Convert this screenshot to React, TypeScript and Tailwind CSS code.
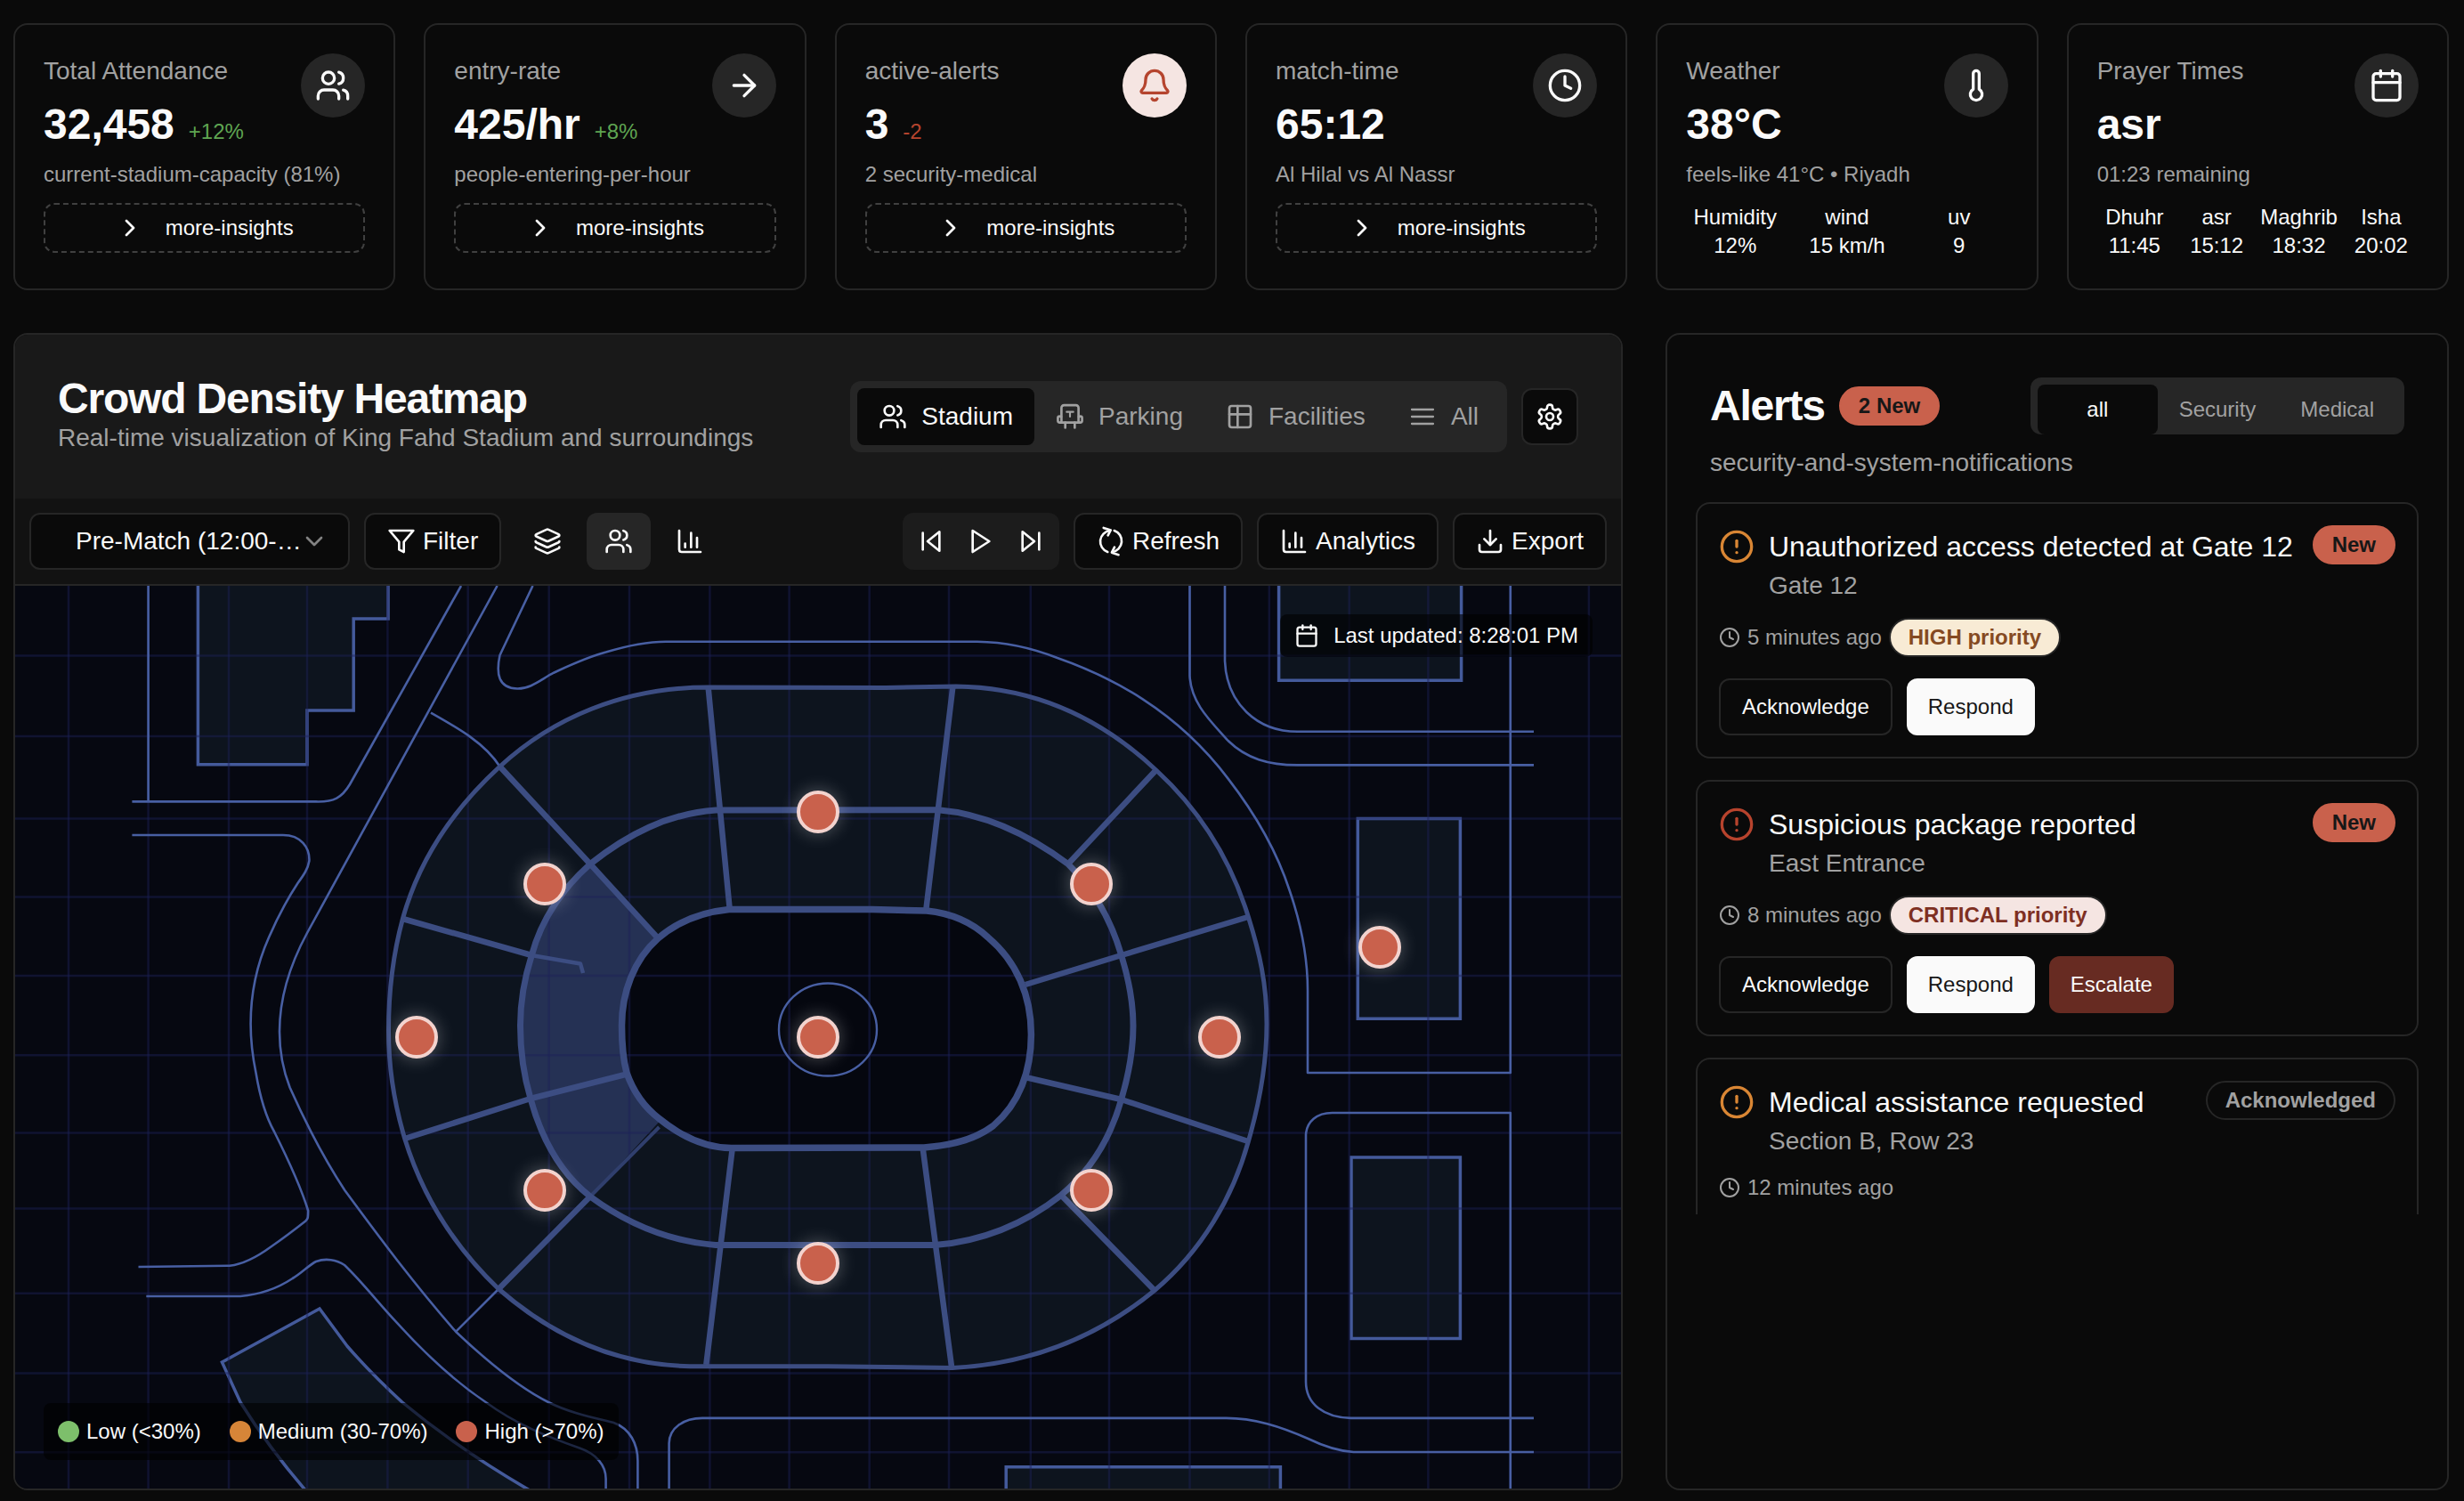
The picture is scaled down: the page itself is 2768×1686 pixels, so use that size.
import type { ReactNode } from "react";
import {
  ArrowRight,
  Bell,
  Calendar,
  ChartColumn,
  ChevronDown,
  ChevronRight,
  CircleAlert,
  Clock,
  Download,
  Layers,
  Thermometer,
  Users,
} from "lucide-react";

/* ---------- custom line icons ---------- */

function Icon({ className, children }: { className?: string; children: ReactNode }) {
  return (
    <svg
      viewBox="0 0 24 24"
      fill="none"
      stroke="currentColor"
      strokeWidth={2}
      strokeLinecap="round"
      strokeLinejoin="round"
      className={className}
    >
      {children}
    </svg>
  );
}

const FunnelIcon = () => (
  <Icon className="size-8">
    <polygon points="22 3 2 3 10 12.46 10 19 14 21 14 12.46 22 3" />
  </Icon>
);

const SkipBackIcon = () => (
  <Icon className="size-8">
    <polygon points="19 20 9 12 19 4 19 20" />
    <line x1="5" x2="5" y1="19" y2="5" />
  </Icon>
);

const PlayIcon = () => (
  <Icon className="size-8">
    <polygon points="5 3 19 12 5 21 5 3" />
  </Icon>
);

const SkipForwardIcon = () => (
  <Icon className="size-8">
    <polygon points="5 4 15 12 5 20 5 4" />
    <line x1="19" x2="19" y1="5" y2="19" />
  </Icon>
);

const RefreshIcon = () => (
  <Icon className="size-8 overflow-visible">
    <path d="M9.200 21A9.300 9.300 0 0 1 11.200 3" />
    <path d="M5.800 .7 11.800 2.600 9.500 7" />
    <path d="M14.800 3A9.300 9.300 0 0 1 13 21" />
    <path d="M15 17 12.700 21.500 18.400 23.400" />
  </Icon>
);

const ParkingIcon = () => (
  <Icon className="size-8">
    <path d="M4.8 12V4.6A2.2 2.2 0 0 1 7 2.4h10a2.2 2.2 0 0 1 2.2 2.2V12" />
    <path d="M4.8 17H3.4a1.6 1.6 0 0 1-1.6-1.6v-2.2a1.5 1.5 0 0 1 3 0V17h14.4v-3.8a1.5 1.5 0 0 1 3 0v2.2a1.6 1.6 0 0 1-1.6 1.6h-1.4" />
    <path d="M8 17v4.4M16 17v4.4" />
    <path d="M9.2 8h5.6M12 8v4" strokeWidth={1.6} />
  </Icon>
);

const FacilitiesIcon = () => (
  <Icon className="size-8">
    <rect x="3" y="3" width="18" height="18" rx="2" />
    <path d="M10 3v18M3 10h18" />
  </Icon>
);

const ListIcon = () => (
  <Icon className="size-8">
    <path d="M3 6h18M3 12h18M3 18h18" strokeWidth={1.7} />
  </Icon>
);

const GearIcon = () => (
  <Icon className="size-8">
    <path d="M12.22 2h-.44a2 2 0 0 0-2 2v.18a2 2 0 0 1-1 1.73l-.43.25a2 2 0 0 1-2 0l-.15-.08a2 2 0 0 0-2.73.73l-.22.38a2 2 0 0 0 .73 2.73l.15.1a2 2 0 0 1 1 1.72v.51a2 2 0 0 1-1 1.74l-.15.09a2 2 0 0 0-.73 2.73l.22.38a2 2 0 0 0 2.73.73l.15-.08a2 2 0 0 1 2 0l.43.25a2 2 0 0 1 1 1.73V20a2 2 0 0 0 2 2h.44a2 2 0 0 0 2-2v-.18a2 2 0 0 1 1-1.73l.43-.25a2 2 0 0 1 2 0l.15.08a2 2 0 0 0 2.73-.73l.22-.39a2 2 0 0 0-.73-2.73l-.15-.08a2 2 0 0 1-1-1.74v-.5a2 2 0 0 1 1-1.74l.15-.09a2 2 0 0 0 .73-2.73l-.22-.38a2 2 0 0 0-2.73-.73l-.15.08a2 2 0 0 1-2 0l-.43-.25a2 2 0 0 1-1-1.73V4a2 2 0 0 0-2-2z" />
    <circle cx="12" cy="12" r="3" />
  </Icon>
);

/* ---------- stat cards ---------- */

type StatCardProps = {
  label: string;
  value: string;
  change?: string;
  negative?: boolean;
  note: string;
  icon: ReactNode;
  alert?: boolean;
  children?: ReactNode;
};

function StatCard({ label, value, change, negative, note, icon, alert, children }: StatCardProps) {
  return (
    <section className="h-75 rounded-2xl border-2 border-[#262626] p-8">
      <div className="flex items-start justify-between">
        <div>
          <h3 className="text-[28px]/10 text-[#a1a1a1]">{label}</h3>
          <div className="mt-2 flex items-baseline">
            <span className="text-5xl/16 font-bold">{value}</span>
            {change && (
              <span className={negative ? "ml-4 text-2xl/8 text-[#b5442e]" : "ml-4 text-2xl/8 text-[#5fa552]"}>
                {change}
              </span>
            )}
          </div>
        </div>
        <div
          className={
            alert
              ? "flex size-18 items-center justify-center rounded-full bg-[#f5e5e2] text-[#b5442e]"
              : "flex size-18 items-center justify-center rounded-full bg-[#262626]"
          }
        >
          {icon}
        </div>
      </div>
      <p className="mt-2 text-2xl/8 whitespace-nowrap text-[#a1a1a1]">{note}</p>
      <div className="mt-4">
        {children ?? (
          <button className="flex h-14 w-full items-center justify-center gap-6 rounded-xl border-2 border-dashed border-[#404040] text-2xl/8">
            <ChevronRight className="size-8" />
            more-insights
          </button>
        )}
      </div>
    </section>
  );
}

function Pair({ name, value }: { name: string; value: string }) {
  return (
    <div className="flex flex-col items-center text-2xl/8 whitespace-nowrap">
      <span>{name}</span>
      <span>{value}</span>
    </div>
  );
}

/* ---------- stadium map ---------- */

const GRID_X = [77, 166.6, 257, 345, 435.4, 525.7, 616.7, 707, 797.4, 886.6, 976.7, 1066, 1157.8, 1246, 1336.5, 1425.8, 1515.7, 1604.4, 1696.8, 1784.9];
const GRID_Y = [736.6, 827, 919.6, 1007.4, 1096, 1185.2, 1272.4, 1357.6, 1452.8, 1542.6, 1631.2];

const OUTER_RING =
  "M795 772C700 772 620 807 561.500 861C508 910 470 968 452.400 1032C442 1070 436.500 1110 436.500 1158C436.500 1200 443 1240 454.700 1279C475 1345 510 1400 560.300 1448C620 1500 690 1533 775 1534.700L930 1534.700L1070 1536.500C1160 1532 1235 1500 1297 1449.500C1350 1405 1385 1345 1402.400 1282C1416 1235 1423 1190 1423 1150C1423 1105 1415 1070 1402.400 1030C1383 967 1350 912 1298.700 865C1238 808 1165 772 1074 771L995 772.500Z";
const MIDDLE_RING =
  "M804 910C750 914 705 937 663 970.500C630 1000 608 1033 597.300 1073C588 1102 584.500 1125 584.500 1152C584.500 1180 588 1207 596 1234C608 1278 630 1318 663 1344C705 1375 750 1394 804 1398.600L1050 1398.600C1105 1394 1152 1374 1192 1342.400C1225 1315 1248 1277 1259.700 1234.700C1268 1207 1273 1180 1273 1152C1273 1125 1268 1100 1259.700 1073C1248 1033 1230 1000 1199.800 970.500C1155 937 1105 914 1054 909.700Z";
const INNER_RING =
  "M819 1021.500C785 1025 760 1036 739.300 1054C712 1078 698.500 1115 698.500 1152C698.500 1172 700 1190 704 1205C711 1225 723 1243 740.500 1256.500C762 1274 790 1289 821.500 1289.600L1038 1289C1075 1286 1098 1278 1115.800 1264.500C1145 1240 1158.400 1203 1158.400 1162C1158.400 1118 1142 1080 1110 1053C1092 1036 1070 1026 1041 1023L980 1021.500Z";
const HIGHLIGHT =
  "M663 970.500C630 1000 608 1033 597.300 1073C588 1102 584.500 1125 584.500 1152C584.500 1180 588 1207 596 1234C608 1278 630 1318 663 1344L740.500 1260C723 1243 711 1225 704 1205C700 1190 698.500 1172 698.500 1152C698.500 1115 712 1078 739.300 1054Z";
const RADIALS =
  "M795.600 772L819.700 1021M1070.300 772L1040.300 1022M822.600 1291L793.300 1533M1036.700 1290L1069 1535M561.500 861L663 970.500L739.300 1054M1298.700 865L1199.800 970.500M452.400 1032L597.300 1073M454.700 1279L596 1234L702.300 1207M560 1448L663 1344M1192 1342.400L1297 1449.500M1402 1030L1259.700 1073L1151.800 1106M1151.800 1210L1259.700 1235L1402 1282";
const ROADS = [
  "M166.600 658V900",
  "M148.400 900.400H355C375 901 384 896 393 881L518 658",
  "M148.400 938H318C338 938 348 952 347.400 967C346 976 341 983 334.500 992C322 1011 312 1030 302 1053C290 1080 281.600 1115 281.600 1150C281.600 1170 284 1188 287.500 1205C292 1232 299 1255 308 1271C323 1301 337 1330 346.200 1360C346 1368 346 1369 343.300 1371.500C330 1382 318 1391 305 1400C290 1411 275 1420 258 1421.700L155.500 1423",
  "M558.600 658L345 1048C325 1085 314 1120 314 1158.800C314 1180 318 1202 325.600 1221.500C345 1265 365 1303 387.300 1337C427 1391 465 1442 512 1495.700C545 1527 580 1557 616 1575C640 1587 665 1592 689.400 1598C708 1605 716.400 1622 716.400 1641V1672",
  "M164.300 1456H270C293 1454 312 1447 328.600 1436C339 1430 347 1421 355 1417C366 1413 378 1415 387 1421C408 1441 425 1464 446 1485.800C477 1520 510 1551 545.700 1575C580 1600 615 1614 651 1626.500C670 1633 680.600 1646 680.600 1661V1672",
  "M598.500 658L561.500 736C557 757 560 773 581 773.500C596 774 608 763 622 755.700C641 747 660 738 680.600 732.600C702 726 725 720.700 748 720.700H1097.800C1130 721 1160 728 1187.800 739C1222 751 1254 766 1283.700 785.400C1320 809 1352 838 1379.600 874.600C1410 914 1434 955 1448.600 1000C1461 1036 1469 1075 1469 1112.500V1205H1696.800V658",
  "M1336.500 658V759C1338 790 1360 810 1379.600 832C1400 852 1425 859.400 1457.600 859.400H1723",
  "M1376 658V742.500C1378 790 1412 821.800 1457.600 821.800H1723",
  "M1723 1592.900H1517.500C1487 1592 1467 1577 1467 1552V1274.400C1468 1260 1479 1250 1496.500 1250H1696.800V1672",
  "M751.600 1672V1621C752 1604 768 1592.900 789 1592.900H1373.600C1408 1592 1440 1603 1469.500 1616C1488 1625 1505 1630 1520.500 1631H1723",
  "M484 800.600C515 818 545 835 561.500 861",
  "M560 1448L512.200 1495.700",
];
const BUILDINGS = [
  "M222.400 650V858.800H345V798H397.200V695H436V650Z",
  "M249.400 1530L359 1470L390 1512C410 1535 430 1555 451.800 1575C500 1615 548 1647 598.500 1676H345C318 1645 292 1610 270 1575Z",
  "M1436.600 650V764.300H1641.600V650Z",
  "M1525.300 919.600H1640.400V1144.200H1525.300Z",
  "M1518 1300H1640.400V1503.600H1518Z",
  "M1130.200 1680V1647.700H1438.400V1680Z",
];

function StadiumMap() {
  return (
    <svg viewBox="17 658 1804 1014" preserveAspectRatio="none" className="block size-full" fill="none">
      <rect x="17" y="658" width="1804" height="1014" fill="#060811" />
      <g fill="#0d141e" stroke="#445a9b" strokeWidth={3.5}>
        {BUILDINGS.map((d) => (
          <path key={d} d={d} />
        ))}
      </g>
      <path d={OUTER_RING} fill="#0d141e" />
      <path d={HIGHLIGHT} fill="#253154" />
      <path d={INNER_RING} fill="#05070f" />
      <g stroke="#1c2258" strokeOpacity={0.45} strokeWidth={2.5}>
        {GRID_X.map((x) => (
          <path key={x} d={`M${x} 658V1672`} />
        ))}
        {GRID_Y.map((y) => (
          <path key={y} d={`M17 ${y}H1821`} />
        ))}
      </g>
      <g stroke="#485fa3" strokeWidth={2.6} strokeLinejoin="round">
        {ROADS.map((d) => (
          <path key={d} d={d} />
        ))}
        <ellipse cx="930" cy="1156.500" rx="55" ry="52" strokeWidth={2.4} />
      </g>
      <g stroke="#3c4d82" strokeLinejoin="round">
        <path d={RADIALS} strokeWidth={6.5} />
        <path d="M597 1073L652 1082.500L655 1093" strokeWidth={4.5} />
        <path d="M663 1344L740.500 1266" strokeWidth={4} stroke="#303f6d" />
        <path d={OUTER_RING} strokeWidth={5} />
        <path d={MIDDLE_RING} strokeWidth={7} />
        <path d={INNER_RING} strokeWidth={7.500} />
      </g>
    </svg>
  );
}

const MARKERS = [
  { left: 50, top: 25 },
  { left: 33, top: 33 },
  { left: 67, top: 33 },
  { left: 85, top: 40 },
  { left: 25, top: 50 },
  { left: 50, top: 50 },
  { left: 75, top: 50 },
  { left: 33, top: 67 },
  { left: 67, top: 67 },
  { left: 50, top: 75 },
];

function LegendItem({ color, label }: { color: string; label: string }) {
  return (
    <div className="flex items-center gap-2">
      <span className={`size-6 rounded-full ${color}`} />
      {label}
    </div>
  );
}

/* ---------- heatmap panel ---------- */

function HeatTab({ icon, label, active }: { icon: ReactNode; label: string; active?: boolean }) {
  return (
    <button
      className={
        active
          ? "flex h-16 items-center gap-4 rounded-lg bg-[#0a0a0a] px-6 text-[#fafafa]"
          : "flex h-16 items-center gap-4 px-6 text-[#a1a1a1]"
      }
    >
      {icon}
      {label}
    </button>
  );
}

function ToolButton({ icon, label }: { icon: ReactNode; label: string }) {
  return (
    <button className="flex h-16 items-center gap-2 rounded-xl border-2 border-[#262626] bg-[#0a0a0a] px-6">
      {icon}
      {label}
    </button>
  );
}

function HeatmapPanel() {
  return (
    <section className="col-span-2 flex h-325 flex-col overflow-hidden rounded-2xl border-2 border-[#262626]">
      <header className="flex h-46 items-center justify-between bg-[#191919] px-12">
        <div>
          <h2 className="text-5xl/12 font-bold tracking-tight">Crowd Density Heatmap</h2>
          <p className="text-[28px]/10 text-[#a1a1a1]">
            Real-time visualization of King Fahd Stadium and surroundings
          </p>
        </div>
        <div className="flex items-center gap-4 text-[28px]/10">
          <div className="flex rounded-xl bg-[#262626] p-2">
            <HeatTab active icon={<Users className="size-8" />} label="Stadium" />
            <HeatTab icon={<ParkingIcon />} label="Parking" />
            <HeatTab icon={<FacilitiesIcon />} label="Facilities" />
            <HeatTab icon={<ListIcon />} label="All" />
          </div>
          <button className="flex size-16 items-center justify-center rounded-xl border-2 border-[#262626] bg-[#0a0a0a]">
            <GearIcon />
          </button>
        </div>
      </header>

      <div className="flex h-[98px] items-center justify-between border-b-2 border-[#262626] bg-[#121212] px-4 text-[28px]/10">
        <div className="flex items-center gap-4">
          <button className="flex h-16 w-90 items-center justify-between rounded-xl border-2 border-[#262626] bg-[#0a0a0a] pr-[22px] pl-[50px]">
            <span className="whitespace-nowrap">Pre-Match (12:00-…</span>
            <ChevronDown className="-ml-2 size-8 shrink-0 opacity-50" />
          </button>
          <ToolButton icon={<FunnelIcon />} label="Filter" />
          <div className="flex gap-2">
            <button className="flex h-16 w-18 items-center justify-center rounded-xl">
              <Layers className="size-8" />
            </button>
            <button className="flex h-16 w-18 items-center justify-center rounded-xl bg-[#262626]">
              <Users className="size-8" />
            </button>
            <button className="flex h-16 w-18 items-center justify-center rounded-xl">
              <ChartColumn className="size-8" />
            </button>
          </div>
        </div>
        <div className="flex items-center gap-4">
          <div className="flex h-16 w-44 items-center justify-center rounded-xl bg-[#1c1c1c]">
            <button className="flex w-14 justify-center">
              <SkipBackIcon />
            </button>
            <button className="flex w-14 justify-center">
              <PlayIcon />
            </button>
            <button className="flex w-14 justify-center">
              <SkipForwardIcon />
            </button>
          </div>
          <ToolButton icon={<RefreshIcon />} label="Refresh" />
          <ToolButton icon={<ChartColumn className="size-8" />} label="Analytics" />
          <ToolButton icon={<Download className="size-8" />} label="Export" />
        </div>
      </div>

      <div className="relative min-h-0 flex-1 text-2xl/8">
        <StadiumMap />
        {MARKERS.map((m) => (
          <span
            key={`${m.left}-${m.top}`}
            className="absolute size-12 -translate-1/2 rounded-full border-4 border-[#f3d3ce] bg-[#c9614c] shadow-[0_0_20px_rgba(255,255,255,0.3)]"
            style={{ left: `${m.left}%`, top: `${m.top}%` }}
          />
        ))}
        <div className="absolute top-8 right-8 flex items-center gap-4 rounded-lg bg-black/60 px-4 py-2">
          <Calendar className="size-7" />
          Last updated: 8:28:01 PM
        </div>
        <div className="absolute bottom-8 left-8 flex gap-8 rounded-lg bg-black/60 p-4">
          <LegendItem color="bg-[#7dbf6b]" label="Low (<30%)" />
          <LegendItem color="bg-[#d68538]" label="Medium (30-70%)" />
          <LegendItem color="bg-[#c9614c]" label="High (>70%)" />
        </div>
      </div>
    </section>
  );
}

/* ---------- alerts panel ---------- */

type AlertProps = {
  title: string;
  place: string;
  time: string;
  tone: "orange" | "red";
  priority?: "HIGH" | "CRITICAL";
  acknowledged?: boolean;
};

function AlertCard({ title, place, time, tone, priority, acknowledged }: AlertProps) {
  return (
    <article className="min-h-72 shrink-0 rounded-2xl border-2 border-[#262626] p-6">
      <div className="flex items-start gap-4">
        <CircleAlert className={tone === "orange" ? "mt-1 size-10 shrink-0 text-[#d98634]" : "mt-1 size-10 shrink-0 text-[#b7432d]"} />
        <div className="flex-1 whitespace-nowrap">
          <h4 className="text-[32px]/12">{title}</h4>
          <p className="text-[28px]/10 text-[#a1a1a1]">{place}</p>
        </div>
        {acknowledged ? (
          <span className="rounded-full border-2 border-[#262626] px-5 py-1 text-2xl/8 font-bold text-[#a1a1a1]">
            Acknowledged
          </span>
        ) : (
          <span className="rounded-full border-2 border-[#c9614c] bg-[#c9614c] px-5 py-1 text-2xl/8 font-bold text-[#171717]">
            New
          </span>
        )}
      </div>
      <div className="mt-4 flex items-center gap-2 text-2xl/8 text-[#a1a1a1]">
        <Clock className="size-6" />
        {time}
        {priority && (
          <span
            className={
              priority === "HIGH"
                ? "rounded-full border-2 border-[#262626] bg-[#f8ebd5] px-5 py-1 font-bold text-[#854a22]"
                : "rounded-full border-2 border-[#262626] bg-[#f5e5e2] px-5 py-1 font-bold text-[#7e2f22]"
            }
          >
            {priority} priority
          </span>
        )}
      </div>
      {!acknowledged && (
        <div className="mt-6 flex gap-4 text-2xl/8">
          <button className="h-16 rounded-xl border-2 border-[#262626] px-6">Acknowledge</button>
          <button className="h-16 rounded-xl bg-[#fafafa] px-6 text-[#171717]">Respond</button>
          {priority === "CRITICAL" && <button className="h-16 rounded-xl bg-[#672b22] px-6">Escalate</button>}
        </div>
      )}
    </article>
  );
}

function AlertsPanel() {
  return (
    <section className="h-325 overflow-hidden rounded-2xl border-2 border-[#262626]">
      <header className="px-12 pt-12 pb-6">
        <div className="flex items-center justify-between">
          <div className="flex items-center gap-4">
            <h2 className="text-5xl/12 font-bold tracking-tight">Alerts</h2>
            <span className="rounded-full border-2 border-[#c9614c] bg-[#c9614c] px-5 py-1 text-2xl/8 font-bold text-[#171717]">
              2 New
            </span>
          </div>
          <div className="grid h-16 w-105 grid-cols-3 rounded-xl bg-[#262626] px-2 pt-2 text-2xl/8 text-[#a1a1a1]">
            <button className="h-14 rounded-lg bg-[#0a0a0a] text-[#fafafa]">all</button>
            <button className="h-14">Security</button>
            <button className="h-14">Medical</button>
          </div>
        </div>
        <p className="mt-3 text-[28px]/10 text-[#a1a1a1]">security-and-system-notifications</p>
      </header>
      <div className="flex h-200 flex-col gap-6 overflow-hidden px-8">
        <AlertCard
          title="Unauthorized access detected at Gate 12"
          place="Gate 12"
          time="5 minutes ago"
          tone="orange"
          priority="HIGH"
        />
        <AlertCard
          title="Suspicious package reported"
          place="East Entrance"
          time="8 minutes ago"
          tone="red"
          priority="CRITICAL"
        />
        <AlertCard
          title="Medical assistance requested"
          place="Section B, Row 23"
          time="12 minutes ago"
          tone="orange"
          acknowledged
        />
      </div>
    </section>
  );
}

/* ---------- page ---------- */

export default function App() {
  return (
    <main className="flex h-[1686px] flex-col gap-12 overflow-hidden bg-[#0a0a0a] pt-[26px] pr-[17px] pl-[15px] font-['Liberation_Sans',Arial,sans-serif] text-[#fafafa]">
      <div className="grid grid-cols-6 gap-8">
        <StatCard
          label="Total Attendance"
          value="32,458"
          change="+12%"
          note="current-stadium-capacity (81%)"
          icon={<Users className="size-10" />}
        />
        <StatCard
          label="entry-rate"
          value="425/hr"
          change="+8%"
          note="people-entering-per-hour"
          icon={<ArrowRight className="size-10" />}
        />
        <StatCard
          label="active-alerts"
          value="3"
          change="-2"
          negative
          note="2 security-medical"
          alert
          icon={<Bell className="size-10" />}
        />
        <StatCard
          label="match-time"
          value="65:12"
          note="Al Hilal vs Al Nassr"
          icon={<Clock className="size-10" />}
        />
        <StatCard
          label="Weather"
          value="38°C"
          note="feels-like 41°C • Riyadh"
          icon={<Thermometer className="size-10" />}
        >
          <div className="grid grid-cols-3 gap-4">
            <Pair name="Humidity" value="12%" />
            <Pair name="wind" value="15 km/h" />
            <Pair name="uv" value="9" />
          </div>
        </StatCard>
        <StatCard
          label="Prayer Times"
          value="asr"
          note="01:23 remaining"
          icon={<Calendar className="size-10" />}
        >
          <div className="grid grid-cols-4 gap-2">
            <Pair name="Dhuhr" value="11:45" />
            <Pair name="asr" value="15:12" />
            <Pair name="Maghrib" value="18:32" />
            <Pair name="Isha" value="20:02" />
          </div>
        </StatCard>
      </div>
      <div className="grid grid-cols-3 gap-12">
        <HeatmapPanel />
        <AlertsPanel />
      </div>
    </main>
  );
}
